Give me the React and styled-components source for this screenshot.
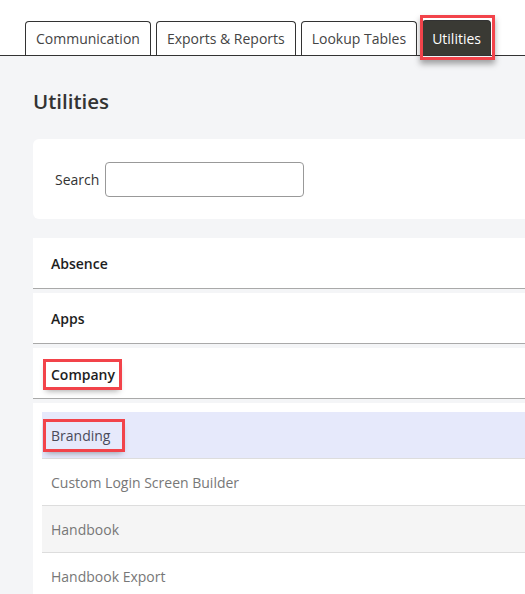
import styled, { createGlobalStyle, css } from "styled-components"

const GlobalStyle = createGlobalStyle`
  body {
    margin: 0;
    font-family: "Open Sans", "Noto Sans", sans-serif;
    background: #f4f5f7;
    overflow: hidden;
  }
`

// red annotation frame drawn over the marked parts
const marked = css`
  outline: 3px solid #f2434a;
  box-shadow: 0 4px 6px rgba(0, 0, 0, 0.35);
`

const Page = styled.div`
  min-height: 594px;
  background: #f4f5f7;
`

const TabBar = styled.nav`
  display: flex;
  align-items: flex-end;
  gap: 5px;
  height: 55px;
  padding-left: 25px;
  background: #fff;
  border-bottom: 1px solid #333;
`

const Tab = styled.div`
  position: relative;
  height: 33px;
  padding: 0 10px;
  display: flex;
  align-items: center;
  font-size: 14px;
  color: ${(p) => (p.$active ? "#fff" : "#444")};
  background: ${(p) => (p.$active ? "#3a3a34" : "#fff")};
  border: 1px solid #333;
  border-bottom: none;
  border-radius: 4px 4px 0 0;
  ${(p) => p.$active && css`
    height: 34px;
    padding: 0 9px;
    &::after {
      content: "";
      position: absolute;
      top: -6px;
      left: -3px;
      right: -5px;
      bottom: -5px;
      border: 3px solid #f2434a;
      box-shadow: 0 4px 6px rgba(0, 0, 0, 0.35);
    }
  `}
`

const Content = styled.main`
  padding: 29px 0 0 33px;
`

const Title = styled.h1`
  margin: 0 0 22px;
  font-size: 20.5px;
  font-weight: 600;
  color: #333;
  line-height: 32px;
`

const SearchCard = styled.div`
  height: 80px;
  display: flex;
  align-items: center;
  gap: 6px;
  padding-left: 22px;
  background: #fff;
  border-radius: 6px 0 0 6px;
  margin-bottom: 19px;
`

const Label = styled.label`
  font-size: 14px;
  color: #333;
`

const Input = styled.input`
  width: 199px;
  height: 35px;
  box-sizing: border-box;
  border: 1px solid #999;
  border-radius: 4px;
  background: #fff;
`

const Accordion = styled.div`
  display: flex;
  flex-direction: column;
  gap: 4px;
`

const Section = styled.section`
  background: #fff;
`

const SectionHead = styled.div`
  height: 50px;
  display: flex;
  align-items: center;
  padding-left: 18px;
  border-bottom: 1px solid #a9a9a9;
  font-size: 14px;
  font-weight: 600;
  color: #1e1e1e;
`

const Mark = styled.span`
  padding: ${(p) => (p.$wide ? "4px 12px 4px 5px" : "3px 4px 3px 5px")};
  margin-left: -5px;
  margin-top: ${(p) => (p.$wide ? "0" : "3px")};
  ${marked}
`

const Panel = styled.div`
  padding: 9px 0 0 9px;
`

const Item = styled.div`
  height: 46px;
  display: flex;
  align-items: center;
  padding-left: 9px;
  font-size: 14px;
  color: ${(p) => (p.$active ? "#4a4a5a" : "#777")};
  background: ${(p) => (p.$active ? "#e6e9fb" : p.$shade ? "#f5f5f5" : "#fff")};
  border-bottom: 1px solid #ddd;
`

const sections = ["Absence", "Apps"]
const items = ["Branding", "Custom Login Screen Builder", "Handbook", "Handbook Export"]

const App = () => {
  return (
    <Page>
      <GlobalStyle />
      <TabBar>
        <Tab>Communication</Tab>
        <Tab>Exports &amp; Reports</Tab>
        <Tab>Lookup Tables</Tab>
        <Tab $active>Utilities</Tab>
      </TabBar>

      <Content>
        <Title>Utilities</Title>
        <SearchCard>
          <Label htmlFor="search">Search</Label>
          <Input id="search" />
        </SearchCard>

        <Accordion>
          {sections.map((s) => (
            <Section key={s}>
              <SectionHead>{s}</SectionHead>
            </Section>
          ))}
          <Section>
            <SectionHead><Mark>Company</Mark></SectionHead>
          </Section>
          <Section>
            <Panel>
              {items.map((it, i) => (
                <Item key={it} $active={i === 0} $shade={i === 2}>
                  {i === 0 ? <Mark $wide>{it}</Mark> : it}
                </Item>
              ))}
            </Panel>
          </Section>
        </Accordion>
      </Content>
    </Page>
  )
}

export default App
